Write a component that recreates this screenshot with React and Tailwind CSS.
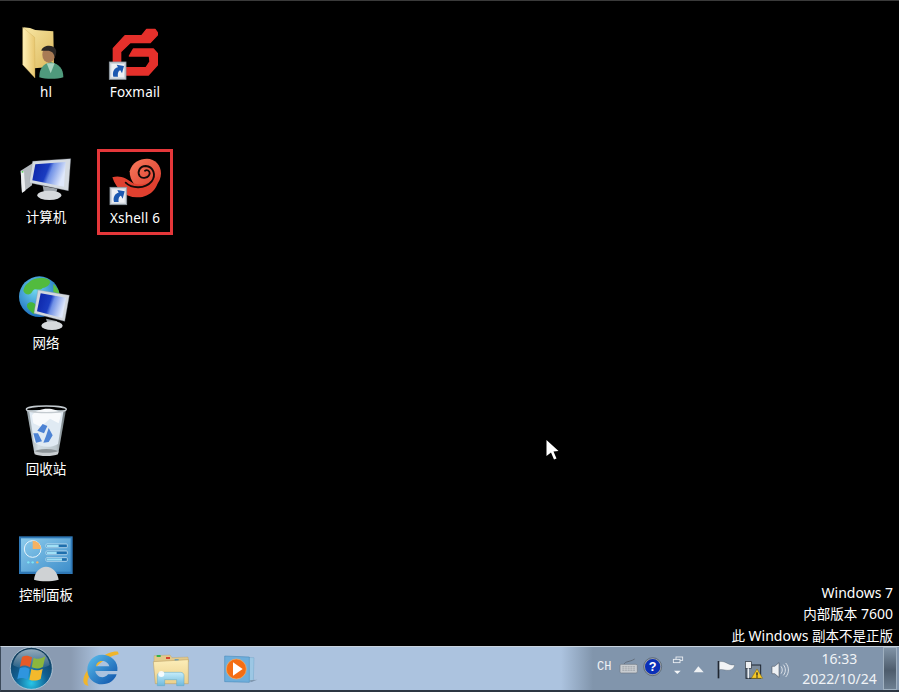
import React from "react";

// all icons are drawn in the coordinates of a 3x crop, so the viewBox just picks the window
function ShortcutBadge({ x, y }) {
  return (
    <g transform={`translate(${x} ${y})`}>
      <rect x="0" y="0" width="50" height="52" fill="#cfd5dc" stroke="#8f99a3" strokeWidth="2.5" />
      <rect x="6" y="6" width="38" height="40" fill="#eef0f4" />
      <path d="M12 44 C8 28 16 18 26 16 L22 8 L44 12 L38 34 L33 25 C26 27 25 36 26 44 Z" fill="#1c58b0" />
    </g>
  );
}

function UserFolderIcon() {
  return (
    <svg className="overflow-visible" width="56" height="52" viewBox="24 18 168 156">
      <defs>
        <linearGradient id="uf1" x1="0" y1="0" x2="1" y2="1">
          <stop offset="0" stopColor="#f8e7a4" />
          <stop offset="1" stopColor="#dcb85c" />
        </linearGradient>
        <linearGradient id="uf2" x1="0" y1="0" x2="1" y2="0">
          <stop offset="0" stopColor="#fff1b8" />
          <stop offset="1" stopColor="#e8c66e" />
        </linearGradient>
      </defs>
      <path d="M40 22 L60 24 L76 30 L130 34 L132 140 L72 145 Z" fill="url(#uf1)" />
      <path d="M38 22 L74 52 L75 174 L38 134 Z" fill="url(#uf2)" stroke="#c9a653" strokeWidth="1" />
      <path d="M88 172 C88 146 98 132 122 126 C148 132 160 146 160 172 C140 178 108 178 88 172 Z" fill="#4f9a7c" />
      <path d="M110 130 L122 160 L134 130 Z" fill="#a9d4bf" />
      <ellipse cx="116" cy="104" rx="19" ry="24" fill="#a87b55" />
      <path d="M94 92 C98 74 132 72 138 90 C140 98 136 110 134 112 C132 98 124 92 112 92 C106 92 100 92 94 92 Z" fill="#2a2624" />
    </svg>
  );
}

function FoxmailIcon() {
  return (
    <svg className="overflow-visible" width="56" height="52" viewBox="21 18 168 156">
      <path
        d="M140 28 L165 28 L172 38 L172 45 L150 68 L90 68 L62 95 L62 143 L138 143 L150 125 L148 108 L88 108 L100 87 L160 87 L172 100 L172 135 L145 165 L60 165 L40 135 L40 85 L75 47 L125 47 Z"
        fill="#e5302b"
        stroke="#e5302b"
        strokeWidth="4"
        strokeLinejoin="round"
      />
      <ShortcutBadge x="28" y="126" />
    </svg>
  );
}

function XshellIcon() {
  return (
    <svg className="overflow-visible" width="56" height="52" viewBox="36 12 168 156">
      <defs>
        <linearGradient id="xs1" x1="0" y1="0" x2="1" y2="1">
          <stop offset="0" stopColor="#f67a5c" />
          <stop offset="1" stopColor="#dc3a2c" />
        </linearGradient>
      </defs>
      <path d="M104 70 C110 44 134 32 156 32 C180 32 198 52 198 76 C198 104 176 124 150 124 C124 124 104 100 104 70 Z" fill="url(#xs1)" />
      <path d="M52 88 C75 80 95 92 110 103 C130 116 170 108 190 84 C194 118 165 150 125 148 C90 148 65 125 52 88 Z" fill="#e0402f" />
      <path
        d="M92 104 C110 122 150 124 170 100 C184 82 176 56 152 54 C134 54 126 72 134 84 C142 94 162 90 164 76 C164 68 156 64 150 68"
        fill="none"
        stroke="#120a08"
        strokeWidth="5.5"
        strokeLinecap="round"
      />
      <ShortcutBadge x="45" y="118" />
    </svg>
  );
}

function ComputerIcon() {
  return (
    <svg className="overflow-visible" width="56" height="52" viewBox="54 456 168 156">
      <defs>
        <linearGradient id="cm1" x1="0" y1="0" x2="1" y2="0.3">
          <stop offset="0" stopColor="#0b22a6" />
          <stop offset="0.5" stopColor="#1a3cc0" />
          <stop offset="0.62" stopColor="#6f90e6" />
          <stop offset="1" stopColor="#dfe8fb" />
        </linearGradient>
      </defs>
      <path d="M62 512 L100 488 L96 556 L66 578 Z" fill="#b5babf" />
      <path d="M62 512 L72 514 L76 572 L66 578 Z" fill="#eceef0" />
      <rect x="65" y="513" width="5" height="5" fill="#5fd05f" />
      <path d="M98 484 L212 476 L205 572 L88 548 Z" fill="#d5dbe2" stroke="#8e969e" strokeWidth="1" />
      <path d="M106 493 L197 486 L192 560 L97 541 Z" fill="url(#cm1)" />
      <path d="M128 558 L172 566 L168 582 L132 578 Z" fill="#9ea4aa" />
      <ellipse cx="148" cy="586" rx="36" ry="14" fill="#d6d9dc" />
    </svg>
  );
}

function NetworkIcon() {
  return (
    <svg className="overflow-visible" width="56" height="52" viewBox="54 54 168 156">
      <defs>
        <radialGradient id="nw1" cx="0.4" cy="0.35" r="0.75">
          <stop offset="0" stopColor="#6fd4ee" />
          <stop offset="1" stopColor="#1160b8" />
        </radialGradient>
        <linearGradient id="nw2" x1="0" y1="0" x2="1" y2="0.3">
          <stop offset="0" stopColor="#0b22a6" />
          <stop offset="0.5" stopColor="#1a3cc0" />
          <stop offset="0.62" stopColor="#6f90e6" />
          <stop offset="1" stopColor="#dfe8fb" />
        </linearGradient>
      </defs>
      <circle cx="118" cy="110" r="61" fill="url(#nw1)" />
      <path d="M88 66 C100 54 132 50 148 60 C156 72 140 82 128 84 C118 96 104 78 96 96 C90 108 74 104 70 92 C72 80 78 72 88 66 Z" fill="#52bb3e" />
      <path d="M82 132 C92 120 110 130 112 146 C114 160 104 166 96 158 C88 150 78 144 82 132 Z" fill="#45b53a" />
      <path d="M160 72 C170 80 178 92 178 102 L160 96 Z" fill="#5cc044" />
      <path d="M114 90 L208 106 L194 184 L102 160 Z" fill="#d3d8de" stroke="#8e969e" strokeWidth="1" />
      <path d="M122 100 L198 113 L187 174 L111 154 Z" fill="url(#nw2)" />
      <path d="M138 176 L172 184 L168 194 L142 190 Z" fill="#9ea4aa" />
      <ellipse cx="156" cy="197" rx="32" ry="13" fill="#d6d9dc" />
    </svg>
  );
}

function TrashIcon() {
  return (
    <svg className="overflow-visible" width="56" height="52" viewBox="54 432 168 156">
      <defs>
        <linearGradient id="tr1" x1="0" y1="0" x2="1" y2="0">
          <stop offset="0" stopColor="#8e999e" />
          <stop offset="0.3" stopColor="#d4dfe6" />
          <stop offset="0.75" stopColor="#bcc7cd" />
          <stop offset="1" stopColor="#656e72" />
        </linearGradient>
      </defs>
      <path d="M80 450 L198 450 L176 574 L102 574 Z" fill="url(#tr1)" />
      <path d="M88 456 L190 456 L174 552 C150 566 120 562 102 546 Z" fill="#e0eaf3" />
      <path d="M96 466 C115 440 165 440 184 462 L176 490 L150 476 L122 500 L100 490 Z" fill="#f8fafc" />
      <path d="M112 512 L128 492 L142 498 L132 520 Z M146 504 L158 526 L146 546 L130 548 L138 528 Z M100 520 L114 520 L126 544 L108 548 Z" fill="#4d83d4" />
      <ellipse cx="139" cy="448" rx="60" ry="10" fill="none" stroke="#c4cbd0" strokeWidth="4" />
      <ellipse cx="139" cy="576" rx="37" ry="9" fill="#8d9498" />
      <path d="M102 572 C115 580 165 580 176 572 L174 583 C160 590 118 590 104 583 Z" fill="#c9ced1" />
    </svg>
  );
}

function ControlPanelIcon() {
  return (
    <svg className="overflow-visible" width="56" height="52" viewBox="54 15 168 156">
      <defs>
        <linearGradient id="cp1" x1="0" y1="0" x2="1" y2="1">
          <stop offset="0" stopColor="#8ccbec" />
          <stop offset="1" stopColor="#3f8fcb" />
        </linearGradient>
      </defs>
      <rect x="57" y="34" width="161" height="113" fill="#2f78b6" />
      <rect x="63" y="40" width="149" height="100" fill="url(#cp1)" />
      <circle cx="98" cy="72" r="25" fill="none" stroke="#e8f4fb" strokeWidth="3" />
      <path d="M98 47 A25 25 0 0 1 123 72 L98 72 Z" fill="#f5b263" />
      <rect x="138" y="57" width="64" height="11" rx="3" fill="#1d6fae" stroke="#dff1fb" strokeWidth="2" />
      <rect x="140" y="59" width="36" height="7" fill="#9fe0f7" />
      <rect x="138" y="78" width="64" height="11" rx="3" fill="#1d6fae" stroke="#dff1fb" strokeWidth="2" />
      <rect x="140" y="80" width="30" height="7" fill="#9fe0f7" />
      <rect x="138" y="98" width="64" height="11" rx="3" fill="#1d6fae" stroke="#dff1fb" strokeWidth="2" />
      <rect x="140" y="100" width="46" height="7" fill="#9fe0f7" />
      <circle cx="85" cy="112" r="3.5" fill="#7fe3f5" />
      <circle cx="98" cy="112" r="3.5" fill="#7fe3f5" />
      <circle cx="112" cy="112" r="3.5" fill="#f5b263" />
      <path d="M102 164 C104 140 120 126 138 125 C158 126 172 140 176 164 C150 170 125 170 102 164 Z" fill="#cfd2d4" />
    </svg>
  );
}

function StartOrb() {
  return (
    <svg width="44" height="44" viewBox="27 366 132 132">
      <defs>
        <radialGradient id="or1" cx="0.5" cy="0.85" r="0.85">
          <stop offset="0" stopColor="#27c6e8" />
          <stop offset="0.45" stopColor="#125f92" />
          <stop offset="1" stopColor="#0f3552" />
        </radialGradient>
        <linearGradient id="or2" x1="0" y1="0" x2="0" y2="1">
          <stop offset="0" stopColor="#d8e6ef" stopOpacity="0.65" />
          <stop offset="1" stopColor="#ffffff" stopOpacity="0.05" />
        </linearGradient>
      </defs>
      <circle cx="94" cy="430" r="63" fill="url(#or1)" stroke="#cfe0ea" strokeWidth="2" />
      <path d="M39 420 C44 390 66 373 94 373 C122 373 144 390 149 420 C125 436 62 436 39 420 Z" fill="url(#or2)" />
      <path d="M66 396 C76 390 86 392 96 397 L90 427 C80 421 70 420 60 425 Z" fill="#e65a26" />
      <path d="M101 398 C112 404 124 402 136 394 L129 425 C118 432 106 432 95 427 Z" fill="#8cb63d" />
      <path d="M59 430 C69 425 79 426 89 432 L83 464 C72 458 62 458 52 462 Z" fill="#2f95de" />
      <path d="M94 432 C105 438 117 437 128 431 L122 462 C110 468 99 468 88 464 Z" fill="#f4b92c" />
    </svg>
  );
}

function IeIcon() {
  return (
    <svg width="40" height="40" viewBox="246 369 120 120">
      <defs>
        <linearGradient id="ie1" x1="0" y1="0" x2="1" y2="1">
          <stop offset="0" stopColor="#5cc0ee" />
          <stop offset="1" stopColor="#0b4fa8" />
        </linearGradient>
      </defs>
      <path d="M354 380 C326 376 276 408 254 450 C246 468 250 482 266 482 C258 472 264 456 278 438 C302 408 332 392 356 388 Z" fill="#f0b52b" />
      <path d="M306 389 C280 389 262 410 262 434 C262 460 282 478 306 478 C328 478 344 466 350 448 L324 448 C318 458 300 460 292 450 C288 446 286 442 286 438 L352 438 C356 410 334 389 306 389 Z M288 424 C290 412 298 408 306 408 C316 408 326 414 328 424 Z" fill="url(#ie1)" fillRule="evenodd" />
    </svg>
  );
}

function ExplorerIcon() {
  return (
    <svg width="40" height="40" viewBox="456 369 120 120">
      <defs>
        <linearGradient id="ex1" x1="0" y1="0" x2="0" y2="1">
          <stop offset="0" stopColor="#fcedb8" />
          <stop offset="1" stopColor="#ecd08a" />
        </linearGradient>
        <linearGradient id="ex2" x1="0" y1="0" x2="0" y2="1">
          <stop offset="0" stopColor="#c4ecfa" />
          <stop offset="1" stopColor="#6fb9dc" />
        </linearGradient>
      </defs>
      <path d="M462 392 L510 390 L516 398 L564 396 L566 410 L462 414 Z" fill="#e2c98b" stroke="#b59b60" strokeWidth="1" />
      <rect x="470" y="390" width="12" height="6" fill="#32b44a" />
      <rect x="498" y="396" width="12" height="6" fill="#d8412f" />
      <rect x="524" y="403" width="12" height="6" fill="#2a8fd8" />
      <path d="M460 410 L565 404 L565 476 L466 476 Z" fill="url(#ex1)" stroke="#b59b60" strokeWidth="1.5" />
      <path d="M472 482 L472 452 C472 446 476 442 482 442 L542 442 C548 442 552 446 552 452 L552 482 L530 482 L530 464 L494 464 L494 482 Z" fill="url(#ex2)" stroke="#5da6c9" strokeWidth="1.5" />
      <circle cx="484" cy="447" r="9" fill="#ffffff" opacity="0.85" />
    </svg>
  );
}

function MediaIcon() {
  return (
    <svg width="40" height="40" viewBox="663 369 120 120">
      <path d="M700 396 L762 398 L760 468 L700 470 Z" fill="#9cc7e4" stroke="#5e9ac3" strokeWidth="1" />
      <path d="M674 393 L748 396 L748 472 L674 470 Z" fill="#6eaedb" stroke="#3e83b5" strokeWidth="1.5" />
      <circle cx="709" cy="432" r="30" fill="#f46d13" stroke="#fbb062" strokeWidth="2" />
      <path d="M699 412 L728 432 L699 452 Z" fill="#ffffff" />
      <path d="M750 466 L772 464 L752 472 Z" fill="#7f95ad" />
    </svg>
  );
}

function KeyboardTray() {
  return (
    <svg width="24" height="24" viewBox="81 30 72 72">
      <path d="M102 58 C106 48 118 52 134 42" fill="none" stroke="#5d6672" strokeWidth="2.5" />
      <rect x="90" y="58" width="52" height="26" rx="4" fill="#c9cdd1" stroke="#717a85" strokeWidth="2" />
      <rect x="97" y="63" width="38" height="15" fill="#a9aeb4" />
      <path d="M97 68 H135 M97 73 H135 M104 63 V78 M112 63 V78 M120 63 V78 M128 63 V78" stroke="#e6e8ea" strokeWidth="1" />
    </svg>
  );
}

function HelpTray() {
  return (
    <svg width="24" height="24" viewBox="153 30 72 72">
      <circle cx="188" cy="65" r="25" fill="#0a2fb8" stroke="#9aa0a6" strokeWidth="4" />
      <circle cx="188" cy="65" r="27" fill="none" stroke="#3d4650" strokeWidth="1.5" />
      <text x="188" y="78" textAnchor="middle" fontSize="38" fontWeight="700" fill="#ffffff" fontFamily="Liberation Sans, sans-serif">?</text>
    </svg>
  );
}

function RestoreTray() {
  return (
    <svg width="24" height="24" viewBox="225 30 72 72">
      <rect x="258" y="36" width="20" height="10" fill="none" stroke="#f0f3f6" strokeWidth="2.5" />
      <rect x="250" y="43" width="20" height="10" fill="#7f93aa" stroke="#f0f3f6" strokeWidth="2.5" />
      <path d="M252 77 L272 77 L262 87 Z" fill="#f4f6f8" />
    </svg>
  );
}

function UpTray() {
  return (
    <svg width="20" height="24" viewBox="297 30 60 72">
      <path d="M325 64 L341 82 L311 82 Z" fill="#eef1f4" />
    </svg>
  );
}

function FlagTray() {
  return (
    <svg width="24" height="24" viewBox="12 30 72 72">
      <rect x="23" y="48" width="5" height="52" fill="#1e2630" />
      <path d="M28 50 C40 48 46 52 54 56 C60 60 68 60 74 60 C72 70 64 76 54 76 C46 76 38 72 28 74 Z" fill="#f2f4f6" stroke="#4d5762" strokeWidth="1" />
    </svg>
  );
}

function NetworkTray() {
  return (
    <svg width="24" height="24" viewBox="93 30 72 72">
      <rect x="108" y="60" width="44" height="40" fill="#7c8b9a" stroke="#1e2630" strokeWidth="3" />
      <rect x="106" y="50" width="18" height="20" fill="#eef0f2" stroke="#2a323c" strokeWidth="2" />
      <path d="M115 70 V100" stroke="#eef0f2" strokeWidth="4" />
      <path d="M141 72 L158 100 L124 100 Z" fill="#f6c928" stroke="#7a6410" strokeWidth="1.5" />
      <rect x="139" y="82" width="4" height="10" fill="#222" />
      <rect x="139" y="94" width="4" height="4" fill="#222" />
    </svg>
  );
}

function SpeakerTray() {
  return (
    <svg width="24" height="24" viewBox="177 30 72 72">
      <path d="M186 64 L194 64 L207 53 L207 97 L194 86 L186 86 Z" fill="#eef1f4" stroke="#3a434e" strokeWidth="1.5" />
      <path d="M213 64 C218 70 218 80 213 86 M220 59 C228 68 228 82 220 91 M227 54 C238 66 238 84 227 96" fill="none" stroke="#eef1f4" strokeWidth="2.5" />
    </svg>
  );
}

const desktopIcons = [
  { label: "hl", icon: <UserFolderIcon />, latin: true },
  { label: "Foxmail", icon: <FoxmailIcon />, latin: true },
  { label: "计算机", icon: <ComputerIcon /> },
  { label: "Xshell 6", icon: <XshellIcon />, latin: true, selected: true },
  { label: "网络", icon: <NetworkIcon /> },
  null,
  { label: "回收站", icon: <TrashIcon /> },
  null,
  { label: "控制面板", icon: <ControlPanelIcon /> },
];

export default function App() {
  return (
    <div className="h-screen w-full flex flex-col overflow-hidden bg-black text-white font-['Noto_Sans','Noto_Sans_CJK_SC',sans-serif]">
      {/* desktop */}
      <div className="relative flex-1 flex justify-between border-t border-[#3a3a3a] pt-[22px] pl-[8px] pr-[6px]">
        <div className="grid grid-cols-[76px_76px] auto-rows-[86px] gap-x-[13px] gap-y-[40px]">
          {desktopIcons.map((item, i) =>
            item ? (
              <div
                key={i}
                className={`flex flex-col items-center border-[3px] ${item.selected ? "border-[#e5373a]" : "border-transparent"}`}
              >
                <div className="h-[52px]">{item.icon}</div>
                <span className={`text-[13.5px] leading-[18px] whitespace-nowrap ${item.latin ? "mt-[5px] tracking-[0.2px]" : "mt-[4px]"}`}>
                  {item.label}
                </span>
              </div>
            ) : (
              <div key={i} />
            )
          )}
        </div>

        <div className="self-end text-right text-[14px] leading-[21.5px]">
          <p className="h-[21.5px]">Windows 7</p>
          <p className="h-[21.5px]"><span className="text-[13.5px]">内部版本</span> 7600</p>
          <p className="h-[21.5px]"><span className="text-[13.5px]">此</span> Windows <span className="text-[13.5px]">副本不是正版</span></p>
        </div>

        {/* mouse pointer */}
        <svg className="absolute left-[546px] top-[439px]" width="13" height="20" viewBox="0 0 13 20">
          <path d="M0.5 0 L12.5 11 L7.5 11.5 L10.5 18.5 L8 19.5 L5 12.5 L0.5 16 Z" fill="#ffffff" />
        </svg>
      </div>

      {/* taskbar */}
      <div className="h-[46px] flex items-start border-t border-[#c9d4df] border-b-2 border-b-[#2c3642] border-l border-l-[#3c4a5a] bg-[linear-gradient(90deg,#8a9bb2_0px,#8a9bb2_70px,#acc3df_100px,#acc3df_560px,#8195ac_592px,#8195ac_100%)]">
        <div className="ml-[8px] h-[44px] shrink-0">
          <StartOrb />
        </div>
        <div className="ml-[29px] mt-[1px] shrink-0">
          <IeIcon />
        </div>
        <div className="ml-[30px] mt-[1px] shrink-0">
          <ExplorerIcon />
        </div>
        <div className="ml-[29px] mt-[1px] shrink-0">
          <MediaIcon />
        </div>

        <div className="ml-auto flex items-start h-full">
          <div className="mt-[8px] flex items-start">
            <span className="w-[20px] font-['Liberation_Mono',monospace] text-[12px] leading-[24px] text-[#eef1f4]">CH</span>
            <KeyboardTray />
            <HelpTray />
            <RestoreTray />
            <UpTray />
            <div className="w-[5px]" />
            <FlagTray />
            <div className="w-[3px]" />
            <NetworkTray />
            <div className="w-[4px]" />
            <SpeakerTray />
          </div>
          <div className="w-[90px] flex flex-col items-center pl-[3px] pt-[2px] text-[14px] leading-[20px] text-[#f0f3f6]">
            <span>16:33</span>
            <span>2022/10/24</span>
          </div>
          <div className="w-[14px] h-[43px] mr-[2px] border border-[#9fb0c0] bg-[linear-gradient(180deg,#8093a6,#4d5c6c_55%,#6d7f91)]" />
        </div>
      </div>
    </div>
  );
}
